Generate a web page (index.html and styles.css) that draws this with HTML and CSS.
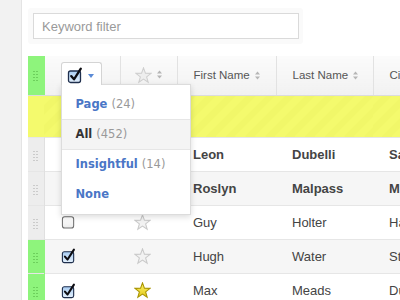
FILE: index.html
```html
<!DOCTYPE html>
<html lang="en">
<head>
    <meta charset="UTF-8">
    <title>Contacts</title>
    <link rel="stylesheet" href="styles.css">
</head>
<body>
<svg class="defs" width="0" height="0">
    <defs>
        <linearGradient id="cbFill" x1="0" y1="0" x2="0" y2="1">
            <stop offset="0" stop-color="#a9cdf3"/>
            <stop offset="1" stop-color="#e4f0fc"/>
        </linearGradient>
        <linearGradient id="cbEmpty" x1="0" y1="0" x2="0" y2="1">
            <stop offset="0" stop-color="#ffffff"/>
            <stop offset="1" stop-color="#ececec"/>
        </linearGradient>
        <linearGradient id="starGold" x1="0" y1="0" x2="0" y2="1">
            <stop offset="0" stop-color="#fff46a"/>
            <stop offset="1" stop-color="#e2c81a"/>
        </linearGradient>
        <symbol id="star" viewBox="0 0 16 16">
            <polygon points="8,0.8 9.82,5.79 15.13,5.98 10.95,9.26 12.41,14.37 8,11.4 3.59,14.37 5.05,9.26 0.87,5.98 6.18,5.79"/>
        </symbol>
        <symbol id="sort" viewBox="0 0 5 9">
            <polygon points="0,3.6 2.5,0.6 5,3.6"/>
            <polygon points="0,5.4 2.5,8.4 5,5.4"/>
        </symbol>
    </defs>
</svg>

<div class="page">
    <div class="side"></div>

    <div class="main">
        <div class="filter">
            <input class="filter-input" type="text" placeholder="Keyword filter">
        </div>

        <table class="grid">
            <colgroup>
                <col class="c-grip">
                <col class="c-check">
                <col class="c-star">
                <col class="c-first">
                <col class="c-last">
                <col class="c-city">
            </colgroup>
            <thead>
                <tr>
                    <th class="grip on"><span class="dots"></span></th>
                    <th class="check">
                        <div class="picker">
                            <div class="pick-btn">
                                <svg class="cb big" viewBox="0 0 16 16"><rect x="1.5" y="3.5" width="12" height="11.5" rx="2" fill="url(#cbFill)" stroke="#1f2f4d" stroke-width="1.3"/><path d="M4.2 8.6 L7 11.8 L13.8 1.2" fill="none" stroke="#0d0d12" stroke-width="2.3" stroke-linecap="round" stroke-linejoin="round"/></svg>
                                <span class="caret"></span>
                            </div>
                            <ul class="menu">
                                <li class="link">Page <span class="count">(24)</span></li>
                                <li class="active">All <span class="count">(452)</span></li>
                                <li class="link">Insightful <span class="count">(14)</span></li>
                                <li class="link">None</li>
                            </ul>
                        </div>
                    </th>
                    <th class="star-col">
                        <svg class="star grey"><use href="#star"/></svg>
                        <svg class="sort"><use href="#sort"/></svg>
                    </th>
                    <th>First Name <svg class="sort"><use href="#sort"/></svg></th>
                    <th>Last Name <svg class="sort"><use href="#sort"/></svg></th>
                    <th>City <svg class="sort"><use href="#sort"/></svg></th>
                </tr>
            </thead>
            <tbody>
                <tr class="flash">
                    <td class="grip"></td>
                    <td></td>
                    <td></td>
                    <td></td>
                    <td></td>
                    <td></td>
                </tr>
                <tr class="unread">
                    <td class="grip"><span class="dots"></span></td>
                    <td></td>
                    <td></td>
                    <td>Leon</td>
                    <td>Dubelli</td>
                    <td>San Diego</td>
                </tr>
                <tr class="unread odd">
                    <td class="grip"><span class="dots"></span></td>
                    <td></td>
                    <td></td>
                    <td>Roslyn</td>
                    <td>Malpass</td>
                    <td>Miami</td>
                </tr>
                <tr>
                    <td class="grip"><span class="dots"></span></td>
                    <td class="cell-check"><svg class="cb" viewBox="0 0 16 16"><rect x="1.5" y="2.5" width="12" height="12" rx="2.5" fill="url(#cbEmpty)" stroke="#6e6e6e" stroke-width="1.1"/></svg></td>
                    <td class="cell-star"><svg class="star grey"><use href="#star"/></svg></td>
                    <td>Guy</td>
                    <td>Holter</td>
                    <td>Hartford</td>
                </tr>
                <tr class="odd">
                    <td class="grip on"><span class="dots"></span></td>
                    <td class="cell-check"><svg class="cb" viewBox="0 0 16 16"><rect x="1.5" y="3.5" width="12" height="11.5" rx="2" fill="url(#cbFill)" stroke="#1f2f4d" stroke-width="1.2"/><path d="M4.2 8.6 L7 11.8 L13.8 1.2" fill="none" stroke="#0d0d12" stroke-width="2.2" stroke-linecap="round" stroke-linejoin="round"/></svg></td>
                    <td class="cell-star"><svg class="star grey"><use href="#star"/></svg></td>
                    <td>Hugh</td>
                    <td>Water</td>
                    <td>Stamford</td>
                </tr>
                <tr>
                    <td class="grip on"><span class="dots"></span></td>
                    <td class="cell-check"><svg class="cb" viewBox="0 0 16 16"><rect x="1.5" y="3.5" width="12" height="11.5" rx="2" fill="url(#cbFill)" stroke="#1f2f4d" stroke-width="1.2"/><path d="M4.2 8.6 L7 11.8 L13.8 1.2" fill="none" stroke="#0d0d12" stroke-width="2.2" stroke-linecap="round" stroke-linejoin="round"/></svg></td>
                    <td class="cell-star"><svg class="star gold"><use href="#star"/></svg></td>
                    <td>Max</td>
                    <td>Meads</td>
                    <td>Durham</td>
                </tr>
            </tbody>
        </table>
    </div>
</div>
</body>
</html>
```

FILE: styles.css
```css
* {
    margin: 0;
    padding: 0;
    box-sizing: border-box;
}

body {
    background: #fff;
    font-family: "Liberation Sans", Arial, sans-serif;
    color: #444;
    overflow: hidden;
}

.defs {
    position: absolute;
}

.page {
    display: flex;
    height: 300px;
}

.side {
    width: 22px;
    flex: none;
    background: #f2f2f2;
    border-right: 1px solid #e4e4e4;
}

.main {
    padding: 8px 0 0 6px;
    flex: none;
}

/* filter */
.filter {
    width: 275px;
    padding: 5px;
    background: #fafafa;
    border-radius: 3px;
    margin-bottom: 12px;
}

.filter-input {
    display: block;
    width: 266px;
    height: 26px;
    border: 1px solid #dadada;
    padding: 0 8px;
    font-family: "Liberation Sans", Arial, sans-serif;
    font-size: 13px;
    color: #444;
    background: #fff;
    outline: none;
}

.filter-input::placeholder {
    color: #9a9a9a;
}

/* grid */
.grid {
    border-collapse: collapse;
    table-layout: fixed;
    width: 480px;
}

.c-grip { width: 16px; }
.c-check { width: 76px; }
.c-star { width: 57px; }
.c-first { width: 99px; }
.c-last { width: 97px; }
.c-city { width: 135px; }

.grid th {
    height: 39px;
    padding: 0 0 0 16px;
    text-align: left;
    font-weight: normal;
    font-size: 11.5px;
    color: #555;
    background: linear-gradient(#fbfbfb, #f1f1f1);
    border-right: 1px solid #e2e2e2;
    border-bottom: 1px solid #dcdcdc;
    white-space: nowrap;
}

.grid td {
    height: 34px;
    padding: 0 0 0 16px;
    font-size: 13px;
    color: #444;
    border-top: 1px solid #e6e6e6;
    white-space: nowrap;
    overflow: hidden;
    background: #fff;
}

.grid tr.odd td {
    background: #f6f6f6;
}

.grid tr.unread td {
    font-weight: bold;
}

.grid tr.flash td {
    height: 42px;
    border-top: 0;
    background: repeating-linear-gradient(135deg, #f4fa6d 0, #f4fa6d 7px, #f1f769 7px, #f1f769 14px);
}

.grid .grip,
.grid tr td.grip {
    padding: 0;
    text-align: center;
    background: #ededed;
    border-right: 1px solid #e0e0e0;
}

.grid th.grip.on,
.grid tr td.grip.on {
    background: #8ef47c;
    border-right-color: #8ef47c;
}

.grid tr.flash td.grip {
    background: #f4fa6d;
    border-right: 0;
}

.dots {
    display: inline-block;
    width: 5px;
    height: 11px;
    vertical-align: middle;
    background-image: radial-gradient(circle, #a9a9a9 0.8px, transparent 0.9px);
    background-size: 3px 3px;
    background-position: -0.5px 0;
}

.on .dots {
    background-image: radial-gradient(circle, #4caa3c 0.8px, transparent 0.9px);
}

.sort {
    width: 5px;
    height: 9px;
    fill: #b5b5b5;
    vertical-align: -1px;
    margin-left: 2px;
}

.star {
    width: 17px;
    height: 17px;
    vertical-align: middle;
}

.star.grey {
    fill: #f2f2f2;
    stroke: #c9c9c9;
    stroke-width: 1;
}

.star.gold {
    fill: url(#starGold);
    stroke: #a89400;
    stroke-width: 1;
}

.star-col {
    padding-left: 14px !important;
}

.star-col .star {
    fill: #eee;
    stroke: #cfcfcf;
}

.cell-check {
    padding-left: 16px !important;
}

.cell-star {
    padding-left: 14px !important;
}

.cb {
    width: 15px;
    height: 16px;
    vertical-align: middle;
}

.cb.big {
    width: 16px;
    height: 17px;
}

/* select menu */
.grid th.check {
    vertical-align: top;
    padding-top: 6px;
}

.picker {
    position: relative;
    width: 41px;
}

.pick-btn {
    position: relative;
    z-index: 3;
    display: flex;
    align-items: center;
    gap: 5px;
    height: 23px;
    padding: 2px 0 0 5px;
    background: #fff;
    border: 1px solid #d4d4d4;
    border-bottom: 0;
    border-radius: 3px 3px 0 0;
}

.caret {
    width: 0;
    height: 0;
    border-left: 3.5px solid transparent;
    border-right: 3.5px solid transparent;
    border-top: 4px solid #5a8ad6;
    margin-top: 2px;
}

.menu {
    position: absolute;
    z-index: 2;
    top: 22px;
    left: 0;
    width: 130px;
    padding: 5px 0 4px;
    list-style: none;
    background: #fff;
    border: 1px solid #dcdcdc;
    box-shadow: 0 2px 6px rgba(0, 0, 0, 0.14);
}

.menu li {
    height: 30px;
    line-height: 29px;
    padding-left: 14px;
    font-family: "DejaVu Sans", Verdana, sans-serif;
    font-size: 11.5px;
    font-weight: bold;
    color: #333;
}

.menu li:nth-child(1),
.menu li:nth-child(2) {
    border-bottom: 1px solid #e6e6e6;
}

.menu li.link {
    color: #4a76c6;
}

.menu li.active {
    background: #f4f4f4;
}

.menu .count {
    font-weight: normal;
    color: #999;
}
```
